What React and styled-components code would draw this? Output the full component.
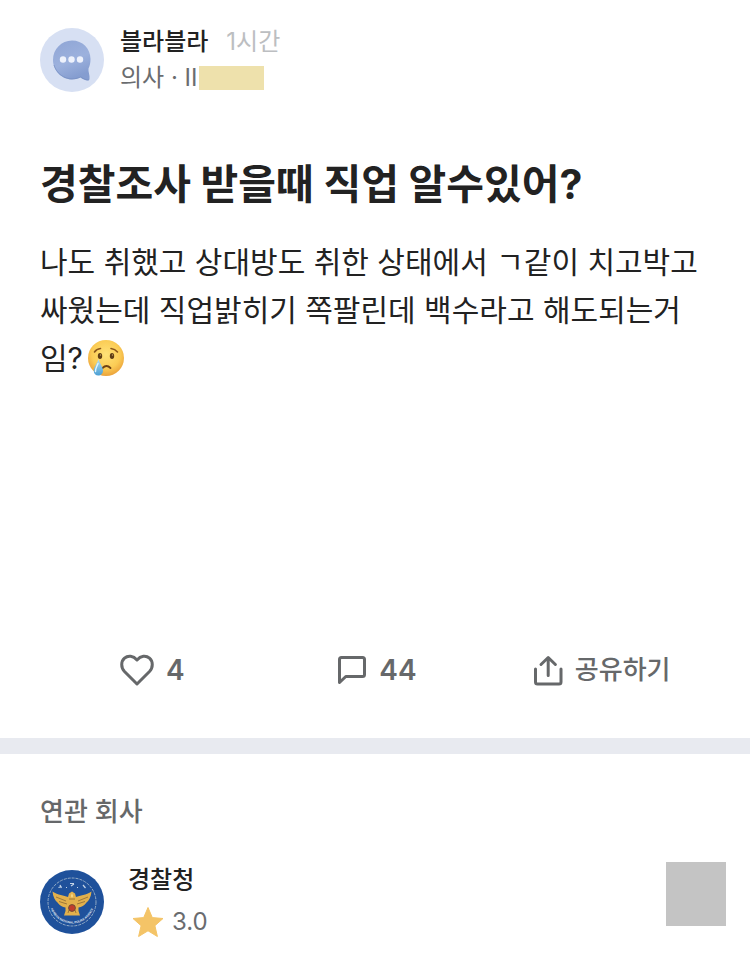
import React from 'react'
import styled, { createGlobalStyle } from 'styled-components'

const App = () => {
    return (
        <>
            <GlobalStyle />
            <Page>
                <Post>
                    <Author>
                        <ChatAvatar />
                        <AuthorText>
                            <NameLine>
                                <Name>블라블라</Name>
                                <Time>1시간</Time>
                            </NameLine>
                            <JobLine>의사 · II<Redacted /></JobLine>
                        </AuthorText>
                    </Author>

                    <Title>경찰조사 받을때 직업 알수있어?</Title>
                    <Body>
                        나도 취했고 상대방도 취한 상태에서 ㄱ같이 치고박고 싸웠는데 직업밝히기 쪽팔린데 백수라고 해도되는거임?<CryingFace />
                    </Body>

                    <Actions>
                        <Action type="button" aria-label="좋아요 4">
                            <HeartIcon />
                            <Count>4</Count>
                        </Action>
                        <Action type="button" aria-label="댓글 44">
                            <CommentIcon />
                            <Count>44</Count>
                        </Action>
                        <Action type="button">
                            <ShareIcon />
                            공유하기
                        </Action>
                    </Actions>
                </Post>

                <Divider />

                <Related>
                    <RelatedHeading>연관 회사</RelatedHeading>
                    <Company>
                        <PoliceBadge />
                        <CompanyText>
                            <CompanyName href="#company">경찰청</CompanyName>
                            <Rating>
                                <StarIcon />
                                3.0
                            </Rating>
                        </CompanyText>
                        <GreyBox />
                    </Company>
                </Related>
            </Page>
        </>
    )
}

const ChatAvatar = () => (
    <Avatar viewBox="0 0 64 64" aria-hidden="true">
        <defs>
            <linearGradient id="bubble" x1="0" y1="0" x2="0.4" y2="1">
                <stop offset="0" stopColor="#8fa5d5" />
                <stop offset="0.6" stopColor="#9cb1dd" />
                <stop offset="1" stopColor="#859dd0" />
            </linearGradient>
        </defs>
        <circle cx="32" cy="32" r="32" fill="#d7e0f3" />
        <path d="M32 12.500C42.500 12.500 50.500 20.500 50.500 31C50.500 35 49.800 38 48.500 40.500C48 44 50 47 49.500 51C49 54 43.500 52 40.500 49.500C38 50.800 35 51.500 32 51.500C21.500 51.500 13 42.500 13 32C13 21 21.500 12.500 32 12.500Z" fill="url(#bubble)" />
        <path d="M14 37C16.500 45.500 24 50.800 32 50.800C35.500 50.800 38.500 50 40.800 48.800C43.500 51 46.500 52.200 48.800 51.800" fill="none" stroke="#7890c2" strokeWidth="1" opacity="0.7" />
        <circle cx="23" cy="31.500" r="3.200" fill="#eef2fc" />
        <circle cx="31.500" cy="31.500" r="3.200" fill="#eef2fc" />
        <circle cx="40" cy="31.500" r="3.200" fill="#eef2fc" />
    </Avatar>
)

const CryingFace = () => (
    <Emoji viewBox="0 0 38 38" role="img" aria-label="우는 얼굴">
        <defs>
            <radialGradient id="face" cx="0.5" cy="0.4" r="0.6">
                <stop offset="0" stopColor="#ffe278" />
                <stop offset="0.65" stopColor="#fbcc55" />
                <stop offset="1" stopColor="#eba23a" />
            </radialGradient>
            <linearGradient id="tear" x1="0" y1="0" x2="0" y2="1">
                <stop offset="0" stopColor="#b4def0" />
                <stop offset="1" stopColor="#4a9fd4" />
            </linearGradient>
        </defs>
        <circle cx="19" cy="19" r="18" fill="url(#face)" />
        <path d="M7.500 13Q9.500 10 13.500 9.500" fill="none" stroke="#8b571c" strokeWidth="1.600" strokeLinecap="round" />
        <path d="M24 9.500Q28 10 30.500 13" fill="none" stroke="#8b571c" strokeWidth="1.600" strokeLinecap="round" />
        <ellipse cx="13" cy="17" rx="2.200" ry="3" fill="#5f3d15" />
        <ellipse cx="25" cy="17" rx="2.200" ry="3" fill="#5f3d15" />
        <circle cx="13.500" cy="16" r="0.700" fill="#c9a860" />
        <circle cx="25.500" cy="16" r="0.700" fill="#c9a860" />
        <path d="M15.500 29Q19.500 25 23.500 29" fill="none" stroke="#6d4214" strokeWidth="1.800" strokeLinecap="round" />
        <path d="M11.500 20C12.500 24 16 28 16 31.500C16 35 13.800 36.500 11.300 36.500C8.700 36.500 6.700 34.800 6.700 31.500C6.700 28 10.500 24 11.500 20Z" fill="url(#tear)" />
        <path d="M11 24.500C9.500 28 8.200 30 8.500 32.500" fill="none" stroke="#e2f5fc" strokeWidth="1.400" strokeLinecap="round" />
    </Emoji>
)

const HeartIcon = () => (
    <LineIcon $width={34} viewBox="0 0 34 34" aria-hidden="true">
        <path d="M17 31L4.500 18.500C0.700 14.500 0.900 8.500 4.500 5.200C8 2 13.200 2.500 17 7C20.800 2.500 26 2 29.500 5.200C33.100 8.500 33.300 14.500 29.500 18.500Z" />
    </LineIcon>
)

const CommentIcon = () => (
    <LineIcon $width={30} viewBox="0 0 30 34" aria-hidden="true">
        <path d="M2.500 29.500V6.500Q2.500 4.500 4.500 4.500H25.500Q27.500 4.500 27.500 6.500V21.500Q27.500 23.500 25.500 23.500H8.800Z" />
    </LineIcon>
)

const ShareIcon = () => (
    <LineIcon $width={30} viewBox="0 0 30 34" aria-hidden="true">
        <path d="M2.500 16V29Q2.500 31 4.500 31H26Q28 31 28 29V16M15.200 22.500V5M8 11.500L15.200 4.500L22.400 11.500" />
    </LineIcon>
)

const StarIcon = () => (
    <Star viewBox="0 0 32 32" aria-hidden="true">
        <path d="M16 1.500L20.300 11.600L31 12.500L22.900 19.700L25.400 30.500L16 24.800L6.600 30.500L9.100 19.700L1 12.500L11.700 11.600Z" fill="#f4c467" stroke="#f4c467" strokeWidth="1" strokeLinejoin="round" />
    </Star>
)

const PoliceBadge = () => (
    <Avatar viewBox="0 0 64 64" aria-hidden="true">
        <defs>
            <path id="badgeArc" d="M9.500 31A22.500 22.500 0 0 0 54.500 31" />
        </defs>
        <circle cx="32" cy="32" r="32" fill="#1f519b" />
        <circle cx="32" cy="32" r="24" fill="none" stroke="#93abc6" strokeWidth="1" strokeDasharray="3 1" />
        <BadgeText>
            <textPath href="#badgeArc" startOffset="50%" textAnchor="middle">KOREAN NATIONAL POLICE AGENCY</textPath>
        </BadgeText>
        <path d="M18.500 17.500l3-1M20 15l1.500 3M30 13.500h4M31 16l3-2M43 15l2.500 3M26 17.500h1M37 17.500h1" stroke="#c4d4e6" strokeWidth="1.200" />
        {/* eagle with spread wings */}
        <path d="M12.500 21.500C18 25 24 25.500 28 27L29 23.500L32 21.500L35 23.500L36 27C40 25.500 46 25 51.500 21.500C51 27 49 30.500 46.500 32.500C44.500 35.500 41.500 37 38.500 37.500L38.500 41L40 45.500H24L25.500 41L25.500 37.500C22.500 37 19.500 35.500 17.500 32.500C15 30.500 13 27 12.500 21.500Z" fill="#e2b04c" />
        <path d="M16 27L26 31M19 31.500L27 34M48 27L38 31M45 31.500L37 34M29 29H35M28 43L29 40M36 43L35 40" stroke="#8c6a35" strokeWidth="0.800" />
        <circle cx="32" cy="38" r="3.400" fill="#c23c2c" stroke="#704f35" strokeWidth="1" />
        <path d="M32 23L33 26L32 28L31 26Z" fill="#f4dc93" />
    </Avatar>
)

const GlobalStyle = createGlobalStyle`
* {
    box-sizing: border-box;
}
body {
    margin: 0;
    background: #fff;
    color: #222;
    font-family: Inter, "Noto Sans CJK KR", sans-serif;
}
`
const Page = styled.main`
width: 100%;
`
const Post = styled.article`
padding: 24px 36px 46px 40px;
`
const Author = styled.header`
display: flex;
align-items: center;
gap: 16px;
`
const Avatar = styled.svg`
flex: none;
width: 64px;
height: 64px;
`
const AuthorText = styled.div`
font-size: 24px;
line-height: 36px;
`
const NameLine = styled.div`
display: flex;
gap: 18px;
`
const Name = styled.span`
font-weight: 500;
`
const Time = styled.time`
color: #bcbec1;
`
const JobLine = styled.div`
display: flex;
align-items: center;
gap: 2px;
color: #6a6c6f;
`
const Redacted = styled.span`
width: 65px;
height: 24px;
background: #eee1ac;
`
const Title = styled.h1`
margin: 60px 0 26px;
font-size: 41px;
font-weight: 700;
line-height: 56px;
`
const Body = styled.p`
min-height: 386px;
margin: 0;
font-size: 30px;
line-height: 48px;
word-break: break-all;
`
const Emoji = styled.svg`
width: 38px;
height: 38px;
margin-left: 4px;
vertical-align: -8px;
`
const Actions = styled.div`
display: grid;
grid-template-columns: repeat(3, 1fr);
margin-top: 24px;
`
const Action = styled.button`
display: flex;
align-items: center;
justify-content: center;
gap: 12px;
padding: 2px 0;
border: 0;
background: none;
color: #66686a;
font-family: inherit;
font-size: 26px;
font-weight: 500;
line-height: 40px;
cursor: pointer;
`
const Count = styled.span`
font-size: 28px;
font-weight: 600;
`
const LineIcon = styled.svg`
width: ${props => props.$width}px;
height: 34px;
fill: none;
stroke: #66686a;
stroke-width: 3;
stroke-linecap: round;
stroke-linejoin: round;
`
const Divider = styled.hr`
height: 16px;
margin: 0;
border: 0;
background: #e8eaf0;
`
const Related = styled.section`
padding: 38px 24px 24px 40px;
`
const RelatedHeading = styled.h2`
margin: 0 0 30px;
color: #66686a;
font-size: 26px;
font-weight: 500;
line-height: 40px;
`
const Company = styled.div`
display: flex;
align-items: flex-start;
gap: 24px;
${Avatar} {
    margin-top: 8px;
}
`
const CompanyText = styled.div`
flex: 1;
`
const CompanyName = styled.a`
display: block;
color: #222;
font-size: 24px;
font-weight: 500;
line-height: 36px;
text-decoration: none;
`
const Rating = styled.div`
display: flex;
align-items: center;
gap: 8px;
margin-top: 6px;
padding-left: 4px;
color: #6a6c6f;
font-size: 24px;
line-height: 36px;
`
const Star = styled.svg`
width: 32px;
height: 32px;
`
const GreyBox = styled.div`
width: 60px;
height: 64px;
background: #c4c4c4;
`
const BadgeText = styled.text`
fill: #e3ebf4;
font-family: "Liberation Sans", sans-serif;
font-size: 3px;
font-weight: 700;
`
export default App
